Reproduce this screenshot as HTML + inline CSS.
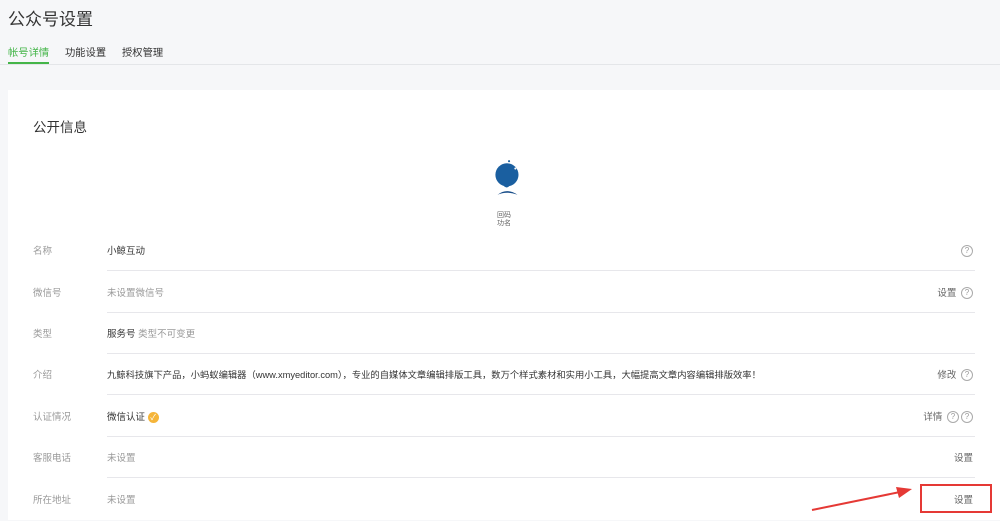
<!DOCTYPE html>
<html><head><meta charset="utf-8"><style>
*{margin:0;padding:0;box-sizing:border-box}
body{width:1000px;height:520px;overflow:hidden;background:#f6f7f9;font-family:"Liberation Sans","Noto Sans CJK SC",sans-serif;position:relative;color:#353535}
.t{position:absolute;left:8px;top:5px;font-size:17px;color:#333}
.tabs{position:absolute;left:8px;top:44px;font-size:10.3px}
.tabs span{position:absolute;white-space:nowrap}
.tabline{position:absolute;left:0;top:64px;width:1000px;height:1px;background:#e4e6e9}
.card{position:absolute;left:8px;top:90px;width:992px;height:430px;background:#fff}
.h{position:absolute;left:33px;top:116px;font-size:13.5px;color:#333}
.row{position:absolute;left:0;width:1000px;height:41px;font-size:9.5px}
.row .l{position:absolute;left:33px;top:1px;line-height:41px;color:#9a9a9a}
.row .v{position:absolute;left:107px;top:1px;line-height:41px;color:#353535;white-space:nowrap}
.row .r{position:absolute;right:27px;top:1px;line-height:41px;color:#666;white-space:nowrap}
.row .ln{position:absolute;left:107px;right:25px;bottom:0;height:1px;background:#e7e7eb}
.q{display:inline-block;width:12px;height:12px;border:1px solid #aaa;border-radius:50%;font-size:8px;line-height:10px;text-align:center;color:#999;vertical-align:middle;margin-left:2px}
.row .g,.g{color:#9a9a9a}
</style></head><body>
<div class="t">公众号设置</div>
<div class="tabs"><span style="left:0;top:0;color:#44b549">帐号详情</span><span style="left:57px;top:0">功能设置</span><span style="left:114px;top:0">授权管理</span></div>
<div style="position:absolute;left:8px;top:62px;width:41px;height:2px;background:#44b549"></div>
<div class="tabline"></div>
<div class="card"></div>
<div class="h">公开信息</div>
<svg style="position:absolute;left:488px;top:157px" width="40" height="42" viewBox="0 0 36 40">
<circle cx="17" cy="17" r="11" fill="#1a5fa0"/><path d="M12 25 Q17 33 21 25Z" fill="#1a5fa0"/><path d="M8 36 Q17 29 27 36 Q17 32 8 36Z" fill="#1a4f8a"/><circle cx="19" cy="4" r="1" fill="#1a5fa0"/><circle cx="25" cy="11" r="1" fill="#fff"/></svg>
<div style="position:absolute;left:497px;top:212px;font-size:7px;line-height:8px;color:#666">回码<br>功名</div>
<div class="row" style="top:230px"><span class="l">名称</span><span class="v">小鲸互动</span><span class="r"><span class="q">?</span></span><div class="ln"></div></div>
<div class="row" style="top:272px"><span class="l">微信号</span><span class="v g">未设置微信号</span><span class="r">设置 <span class="q">?</span></span><div class="ln"></div></div>
<div class="row" style="top:313px"><span class="l">类型</span><span class="v">服务号 <span class="g">类型不可变更</span></span><div class="ln"></div></div>
<div class="row" style="top:354px"><span class="l">介绍</span><span class="v" style="font-size:9.3px">九鲸科技旗下产品，小蚂蚁编辑器（www.xmyeditor.com），专业的自媒体文章编辑排版工具，数万个样式素材和实用小工具，大幅提高文章内容编辑排版效率！</span><span class="r">修改 <span class="q">?</span></span><div class="ln"></div></div>
<div class="row" style="top:396px"><span class="l">认证情况</span><span class="v">微信认证 <span style="display:inline-block;width:11px;height:11px;border-radius:50%;background:#f5b53a;color:#fff;font-size:8px;line-height:11px;text-align:center;vertical-align:middle">✓</span></span><span class="r">详情 <span class="q">?</span><span class="q">?</span></span><div class="ln"></div></div>
<div class="row" style="top:437px"><span class="l">客服电话</span><span class="v g">未设置</span><span class="r">设置</span><div class="ln"></div></div>
<div class="row" style="top:479px"><span class="l">所在地址</span><span class="v g">未设置</span><span class="r">设置</span></div>
<div style="position:absolute;left:920px;top:484px;width:72px;height:29px;border:2px solid #e53935"></div>
<svg style="position:absolute;left:0;top:0" width="1000" height="520"><line x1="812" y1="510" x2="900" y2="492" stroke="#e53935" stroke-width="2"/><polygon points="912,489 896,487 899,498" fill="#e53935"/></svg>
</body></html>
